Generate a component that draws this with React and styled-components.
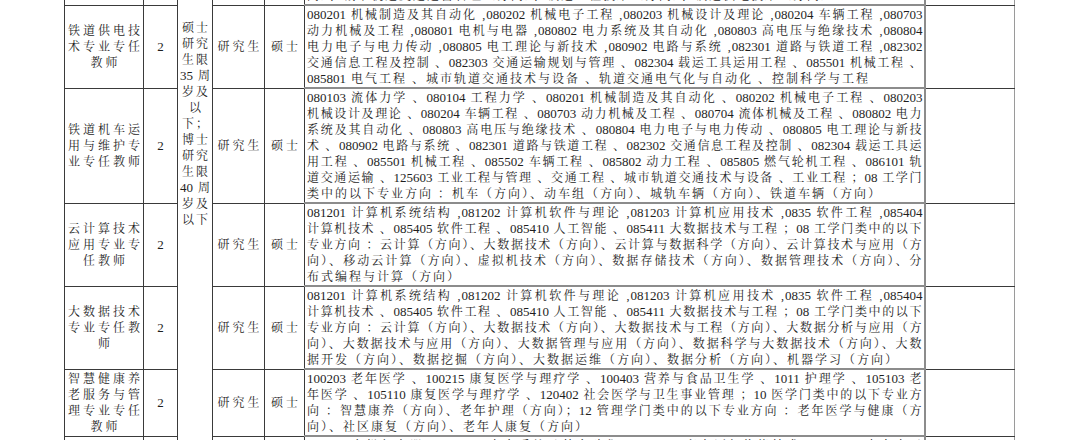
import React from 'react';
import styled, { createGlobalStyle } from 'styled-components';

const GlobalStyle = createGlobalStyle`
  html, body {
    margin: 0;
    padding: 0;
    background: #fff;
    overflow: hidden;
  }
`;

const Page = styled.div`
  height: 440px;
  overflow: hidden;
  padding-left: 64px;
  color: #1e1e1e;
  font-family: "Liberation Serif", "Noto Serif CJK SC", "Noto Sans CJK SC", serif;
  font-size: 12px;
`;

const Table = styled.table`
  border-collapse: collapse;
  table-layout: fixed;
  width: 950px;
  margin-top: -14px;
`;

const Cell = styled.td`
  border: 1px solid #3a3a3a;
  padding: 0;
  line-height: 16px;
  vertical-align: middle;
  text-align: center;
`;

const NameCell = styled(Cell)`
  letter-spacing: 3px;
  padding-left: 3px;
`;

const AgeCell = styled(Cell)`
  vertical-align: top;
  padding-top: 33px;
  letter-spacing: 2px;
  padding-left: 2px;
`;

const MajorCell = styled(Cell)`
  vertical-align: top;
  text-align: left;
  padding: 1px 1px 0 2px;
  border-bottom: 2px solid #8c8c8c;
  border-right: 2px solid #8c8c8c;
`;

const BlankCell = styled(Cell)`
  border-right-color: #9a9a9a;
`;

const Line = styled.div`
  height: 16px;
  overflow: hidden;
  text-align: justify;
  text-align-last: ${(p) => (p.$last ? 'left' : 'justify')};
  letter-spacing: ${(p) => (p.$last ? '2px' : '1px')};
`;

const Num = styled.span`
  letter-spacing: 0;
  font-size: 13px;
`;

const renderText = (str) =>
  str.split(/([0-9]+)/).map((part, i) =>
    /^[0-9]+$/.test(part) ? <Num key={i}>{part}</Num> : part,
  );

const Major = ({ lines }) => (
  <MajorCell>
    {lines.map((l, i) => (
      <Line key={i} $last={i === lines.length - 1}>
        {renderText(l)}
      </Line>
    ))}
  </MajorCell>
);

const Name = ({ lines }) => (
  <NameCell>
    {lines.map((l, i) => (
      <div key={i}>{l}</div>
    ))}
  </NameCell>
);

const ageLines = [
  '硕士', '研究', '生限', '35 周', '岁及', '以', '下；',
  '博士', '研究', '生限', '40 周', '岁及', '以下',
];

const rows = [
  {
    name: ['铁道供电技', '术专业专任', '教师'],
    lines: [
      '080201 机械制造及其自动化 ,080202 机械电子工程 ,080203 机械设计及理论 ,080204 车辆工程 ,080703',
      '动力机械及工程 ,080801 电机与电器 ,080802 电力系统及其自动化 ,080803 高电压与绝缘技术 ,080804',
      '电力电子与电力传动 ,080805 电工理论与新技术 ,080902 电路与系统 ,082301 道路与铁道工程 ,082302',
      '交通信息工程及控制 、082303 交通运输规划与管理 、082304 载运工具运用工程 、085501 机械工程 、',
      '085801 电气工程 、城市轨道交通技术与设备 、轨道交通电气化与自动化 、控制科学与工程',
    ],
  },
  {
    name: ['铁道机车运', '用与维护专', '业专任教师'],
    lines: [
      '080103 流体力学 、080104 工程力学 、080201 机械制造及其自动化 、080202 机械电子工程 、080203',
      '机械设计及理论 、080204 车辆工程 、080703 动力机械及工程 、080704 流体机械及工程 、080802 电力',
      '系统及其自动化 、080803 高电压与绝缘技术 、080804 电力电子与电力传动 、080805 电工理论与新技',
      '术 、080902 电路与系统 、082301 道路与铁道工程 、082302 交通信息工程及控制 、082304 载运工具运',
      '用工程 、085501 机械工程 、085502 车辆工程 、085802 动力工程 、085805 燃气轮机工程 、086101 轨',
      '道交通运输 、125603 工业工程与管理 、交通工程 、城市轨道交通技术与设备 、工业工程 ；08 工学门',
      '类中的以下专业方向 ：机车（方向）、动车组（方向）、城轨车辆（方向）、铁道车辆（方向）',
    ],
  },
  {
    name: ['云计算技术', '应用专业专', '任教师'],
    lines: [
      '081201 计算机系统结构 ,081202 计算机软件与理论 ,081203 计算机应用技术 ,0835 软件工程 ,085404',
      '计算机技术 、085405 软件工程 、085410 人工智能 、085411 大数据技术与工程 ；08 工学门类中的以下',
      '专业方向 ：云计算（方向）、大数据技术（方向）、云计算与数据科学（方向）、云计算技术与应用（方',
      '向）、移动云计算（方向）、虚拟机技术（方向）、数据存储技术（方向）、数据管理技术（方向）、分',
      '布式编程与计算（方向）',
    ],
  },
  {
    name: ['大数据技术', '专业专任教', '师'],
    lines: [
      '081201 计算机系统结构 ,081202 计算机软件与理论 ,081203 计算机应用技术 ,0835 软件工程 ,085404',
      '计算机技术 、085405 软件工程 、085410 人工智能 、085411 大数据技术与工程 ；08 工学门类中的以下',
      '专业方向 ：云计算（方向）、大数据技术（方向）、大数据技术与工程（方向）、大数据分析与应用（方',
      '向）、大数据技术与应用（方向）、大数据管理与应用（方向）、数据科学与大数据技术（方向）、大数',
      '据开发（方向）、数据挖掘（方向）、大数据运维（方向）、数据分析（方向）、机器学习（方向）',
    ],
  },
  {
    name: ['智慧健康养', '老服务与管', '理专业专任', '教师'],
    lines: [
      '100203 老年医学 、100215 康复医学与理疗学 、100403 营养与食品卫生学 、1011 护理学 、105103 老',
      '年医学 、105110 康复医学与理疗学 、120402 社会医学与卫生事业管理 ；10 医学门类中的以下专业方',
      '向 ：智慧康养（方向）、老年护理（方向）；12 管理学门类中的以下专业方向 ：老年医学与健康（方',
      '向）、社区康复（方向）、老年人康复（方向）',
    ],
  },
  {
    name: ['电气自动化', '技术专业专', '任教师'],
    lines: [
      '080801 电机与电器 、080802 电力系统及其自动化 、080803 高电压与绝缘技术 、080804 电力电子',
      '与电力传动 、080805 电工理论与新技术 、081101 控制理论与控制工程 、081102 检测技术与自动',
      '化装置 、081103 系统工程 、081104 模式识别与智能系统 、081105 导航 、制导与控制 、085406',
      '控制工程 、085801 电气工程 ；08 工学门类中的以下专业方向 ：电气自动化（方向）、工业自动化',
      '（方向）、智能控制技术（方向）',
    ],
  },
];

const App = () => (
  <Page>
    <GlobalStyle />
    <Table>
      <colgroup>
        <col style={{ width: 79 }} />
        <col style={{ width: 34 }} />
        <col style={{ width: 35 }} />
        <col style={{ width: 52 }} />
        <col style={{ width: 40 }} />
        <col style={{ width: 620 }} />
        <col style={{ width: 90 }} />
      </colgroup>
      <tbody>
        <tr>
          <Cell />
          <Cell />
          <AgeCell rowSpan={rows.length + 1}>
            {ageLines.map((l, i) => (
              <div key={i}>{renderText(l)}</div>
            ))}
          </AgeCell>
          <Cell />
          <Cell />
          <Major lines={['向）、城市轨道交通运营管理（方向）、铁道工程技术（方向）、铁道供电技术（方向）']} />
          <BlankCell />
        </tr>
        {rows.map((r, i) => (
          <tr key={i}>
            <Name lines={r.name} />
            <Cell>
              <Num>2</Num>
            </Cell>
            <NameCell>研究生</NameCell>
            <NameCell>硕士</NameCell>
            <Major lines={r.lines} />
            <BlankCell />
          </tr>
        ))}
      </tbody>
    </Table>
  </Page>
);

export default App;
